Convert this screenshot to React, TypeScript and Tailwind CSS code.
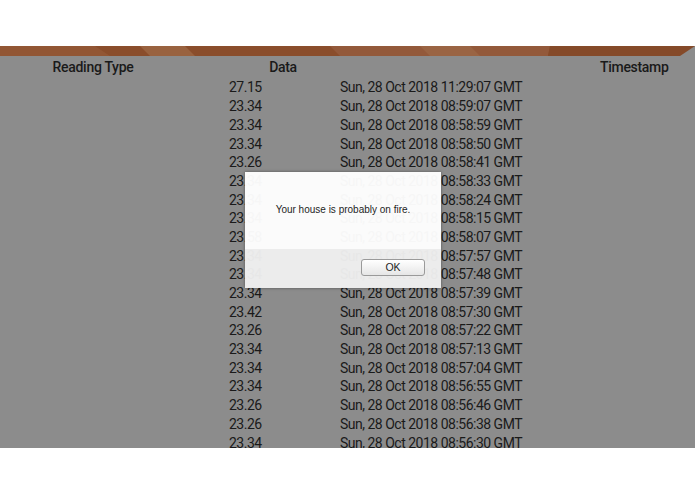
import React from "react";

const rows: [string, string][] = [
  ["27.15", "Sun, 28 Oct 2018 11:29:07 GMT"],
  ["23.34", "Sun, 28 Oct 2018 08:59:07 GMT"],
  ["23.34", "Sun, 28 Oct 2018 08:58:59 GMT"],
  ["23.34", "Sun, 28 Oct 2018 08:58:50 GMT"],
  ["23.26", "Sun, 28 Oct 2018 08:58:41 GMT"],
  ["23.34", "Sun, 28 Oct 2018 08:58:33 GMT"],
  ["23.34", "Sun, 28 Oct 2018 08:58:24 GMT"],
  ["23.34", "Sun, 28 Oct 2018 08:58:15 GMT"],
  ["23.58", "Sun, 28 Oct 2018 08:58:07 GMT"],
  ["23.34", "Sun, 28 Oct 2018 08:57:57 GMT"],
  ["23.34", "Sun, 28 Oct 2018 08:57:48 GMT"],
  ["23.34", "Sun, 28 Oct 2018 08:57:39 GMT"],
  ["23.42", "Sun, 28 Oct 2018 08:57:30 GMT"],
  ["23.26", "Sun, 28 Oct 2018 08:57:22 GMT"],
  ["23.34", "Sun, 28 Oct 2018 08:57:13 GMT"],
  ["23.34", "Sun, 28 Oct 2018 08:57:04 GMT"],
  ["23.34", "Sun, 28 Oct 2018 08:56:55 GMT"],
  ["23.26", "Sun, 28 Oct 2018 08:56:46 GMT"],
  ["23.26", "Sun, 28 Oct 2018 08:56:38 GMT"],
  ["23.34", "Sun, 28 Oct 2018 08:56:30 GMT"],
];

function Bar() {
  return (
    <svg width="695" height="10" viewBox="0 0 695 10" className="block">
      <rect width="695" height="10" fill="#8a4d2b" />
      <polygon points="0,0 95,0 110,10 0,10" fill="#925634" />
      <polygon points="140,0 185,0 195,10 150,10" fill="#99623f" />
      <polygon points="330,0 550,0 548,10 340,10" fill="#93593a" />
      <polygon points="420,0 470,0 480,10 430,10" fill="#9a6443" />
      <polygon points="550,0 695,0 695,10 548,10" fill="#854a29" />
      <polygon points="680,10 695,0 695,10" fill="#8c8c8c" />
    </svg>
  );
}

export default function App() {
  return (
    <div className="relative w-[695px] h-[494px] bg-white overflow-hidden">
      <div className="h-[46px] bg-white" />
      <Bar />
      <div
        className="h-[392px] bg-[#8c8c8c] overflow-hidden text-[#1a1a1a]"
        style={{ fontFamily: "Roboto, 'Noto Sans', sans-serif" }}
      >
        <div className="flex h-[22.6px] items-center text-[14px] font-medium tracking-[-0.3px]">
          <div className="w-[186px] text-center">Reading Type</div>
          <div className="w-[194px] text-center">Data</div>
          <div className="flex-1 pl-[220px]">Timestamp</div>
        </div>
        {rows.map(([v, t], i) => (
          <div key={i} className="flex h-[18.7px] items-center text-[14px] tracking-[-0.5px] pl-[229px]">
            <div className="w-[111px]">{v}</div>
            <div>{t}</div>
          </div>
        ))}
      </div>

      <div
        className="absolute left-[245px] top-[172px] w-[196px] h-[116px] flex flex-col shadow-[0_0_3px_rgba(0,0,0,0.4)]"
        style={{ fontFamily: "'Liberation Sans', Arial, sans-serif" }}
      >
        <div className="h-[77px] bg-white/[0.96] flex items-center justify-center text-[10px] text-[#1e1e1e] pb-[2px]">
          Your house is probably on fire.
        </div>
        <div className="flex-1 bg-[#efefef]/[0.96] flex items-start justify-end pt-[10px] pr-[16px]">
          <div className="w-[64px] h-[17px] rounded-[3px] border border-[#9a9a9a] bg-gradient-to-b from-white to-[#e6e6e6] flex items-center justify-center text-[10.5px] text-[#1e1e1e]">
            OK
          </div>
        </div>
      </div>
    </div>
  );
}
